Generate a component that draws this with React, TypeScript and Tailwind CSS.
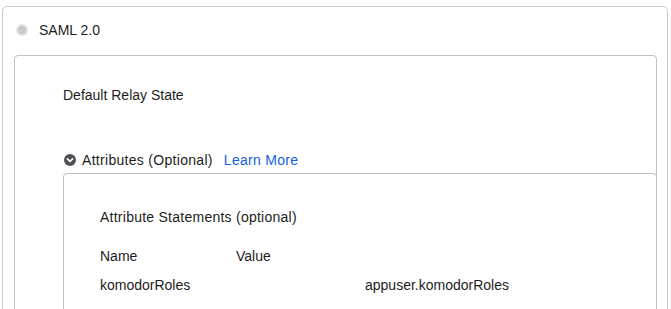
import React from "react";

export default function App() {
  return (
    <div
      className="w-[671px] h-[309px] overflow-hidden bg-white text-[#1d1d21]"
      style={{ fontFamily: '"Liberation Sans", Arial, sans-serif' }}
    >
      <div className="ml-[2px] mt-[6px] w-[666px] h-[320px] border border-[#c8c8cd] rounded-[5px]">
        <div className="flex items-center h-[46px] pl-[13px] pb-[1px]">
          <div className="w-[12px] h-[12px] rounded-full border-2 border-[#e2e2e4] bg-[#c9c9cc]" />
          <span className="ml-[11px] text-[14px] leading-none">SAML 2.0</span>
        </div>
        <div className="ml-[11px] mr-[10px] mt-[2px] h-[280px] border border-[#c1c1c8] rounded-[4px] pl-[48px] text-[14px]">
          <div className="h-[79px] pt-[31px] leading-[16px]">Default Relay State</div>
          <div className="flex items-center h-[38px] pt-[12px]">
            <svg width="12" height="12" viewBox="0 0 12 12" className="ml-[1px]">
              <circle cx="6" cy="6" r="6" fill="#4f4f55" />
              <path d="M3.4 4.9 L6 7.4 L8.6 4.9" fill="none" stroke="#fff" strokeWidth="1.6" strokeLinecap="round" strokeLinejoin="round" />
            </svg>
            <span className="ml-[6px] leading-none tracking-[0.3px]">Attributes (Optional)</span>
            <span className="ml-[11px] leading-none text-[#1662dd] tracking-[0.3px]">Learn More</span>
          </div>
          <div className="h-[200px] border border-[#c1c1c8] rounded-[4px] mr-[-1px] pl-[36px] leading-[16px]">
            <div className="pt-[35px] tracking-[0.25px]">Attribute Statements (optional)</div>
            <div className="flex mt-[23px]">
              <span className="w-[136px]">Name</span>
              <span>Value</span>
            </div>
            <div className="flex mt-[13px]">
              <span className="w-[265px]">komodorRoles</span>
              <span>appuser.komodorRoles</span>
            </div>
          </div>
        </div>
      </div>
    </div>
  );
}
